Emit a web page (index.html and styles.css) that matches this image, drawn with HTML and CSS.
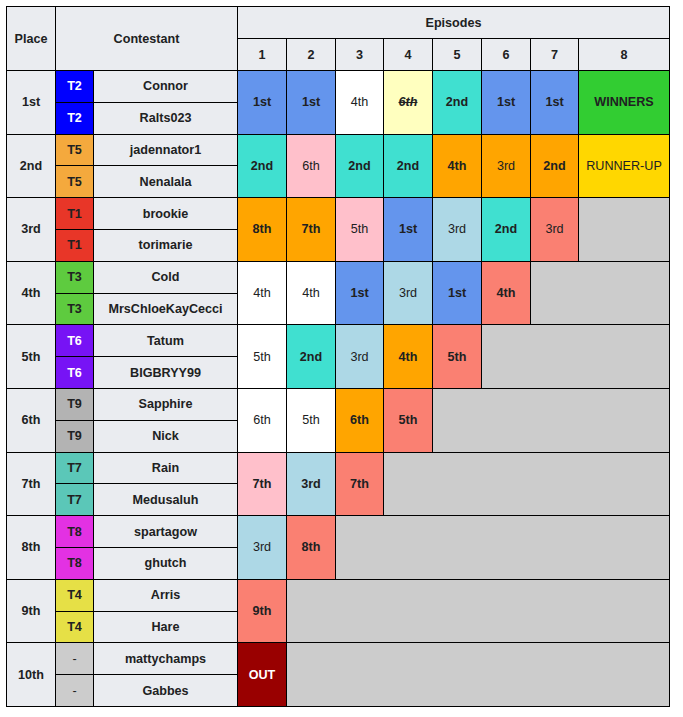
FILE: index.html
```html
<!DOCTYPE html>
<html>
<head>
<meta charset="utf-8">
<link rel="stylesheet" href="styles.css">
</head>
<body>
<div class="board">
  <div class="c hd r2">Place</div>
  <div class="c hd r2 s2">Contestant</div>
  <div class="c hd s8">Episodes</div>
  <div class="c hd">1</div><div class="c hd">2</div><div class="c hd">3</div><div class="c hd">4</div>
  <div class="c hd">5</div><div class="c hd">6</div><div class="c hd">7</div><div class="c hd">8</div>

  <!-- 1st -->
  <div class="c hd r2">1st</div>
  <div class="c t t2">T2</div><div class="c hd">Connor</div>
  <div class="c r2 blue b">1st</div><div class="c r2 blue b">1st</div><div class="c r2 wht">4th</div>
  <div class="c r2 ylw b strike">6th</div><div class="c r2 turq b">2nd</div><div class="c r2 blue b">1st</div>
  <div class="c r2 blue b">1st</div><div class="c r2 green b">WINNERS</div>
  <div class="c t t2">T2</div><div class="c hd">Ralts023</div>

  <!-- 2nd -->
  <div class="c hd r2">2nd</div>
  <div class="c t t5">T5</div><div class="c hd">jadennator1</div>
  <div class="c r2 turq b">2nd</div><div class="c r2 pink">6th</div><div class="c r2 turq b">2nd</div>
  <div class="c r2 turq b">2nd</div><div class="c r2 orng b">4th</div><div class="c r2 orng">3rd</div>
  <div class="c r2 orng b">2nd</div><div class="c r2 gold">RUNNER-UP</div>
  <div class="c t t5">T5</div><div class="c hd">Nenalala</div>

  <!-- 3rd -->
  <div class="c hd r2">3rd</div>
  <div class="c t t1">T1</div><div class="c hd">brookie</div>
  <div class="c r2 orng b">8th</div><div class="c r2 orng b">7th</div><div class="c r2 pink">5th</div>
  <div class="c r2 blue b">1st</div><div class="c r2 lblu">3rd</div><div class="c r2 turq b">2nd</div>
  <div class="c r2 salm">3rd</div><div class="c r2 fill f1"></div>
  <div class="c t t1">T1</div><div class="c hd">torimarie</div>

  <!-- 4th -->
  <div class="c hd r2">4th</div>
  <div class="c t t3">T3</div><div class="c hd">Cold</div>
  <div class="c r2 wht">4th</div><div class="c r2 wht">4th</div><div class="c r2 blue b">1st</div>
  <div class="c r2 lblu">3rd</div><div class="c r2 blue b">1st</div><div class="c r2 salm b">4th</div>
  <div class="c r2 fill f2"></div>
  <div class="c t t3">T3</div><div class="c hd">MrsChloeKayCecci</div>

  <!-- 5th -->
  <div class="c hd r2">5th</div>
  <div class="c t t6">T6</div><div class="c hd">Tatum</div>
  <div class="c r2 wht">5th</div><div class="c r2 turq b">2nd</div><div class="c r2 lblu">3rd</div>
  <div class="c r2 orng b">4th</div><div class="c r2 salm b">5th</div>
  <div class="c r2 fill f3"></div>
  <div class="c t t6">T6</div><div class="c hd">BIGBRYY99</div>

  <!-- 6th -->
  <div class="c hd r2">6th</div>
  <div class="c t t9">T9</div><div class="c hd">Sapphire</div>
  <div class="c r2 wht">6th</div><div class="c r2 wht">5th</div><div class="c r2 orng b">6th</div>
  <div class="c r2 salm b">5th</div>
  <div class="c r2 fill f4"></div>
  <div class="c t t9">T9</div><div class="c hd">Nick</div>

  <!-- 7th -->
  <div class="c hd r2">7th</div>
  <div class="c t t7">T7</div><div class="c hd">Rain</div>
  <div class="c r2 pink b">7th</div><div class="c r2 lblu b">3rd</div><div class="c r2 salm b">7th</div>
  <div class="c r2 fill f5"></div>
  <div class="c t t7">T7</div><div class="c hd">Medusaluh</div>

  <!-- 8th -->
  <div class="c hd r2">8th</div>
  <div class="c t t8">T8</div><div class="c hd">spartagow</div>
  <div class="c r2 lblu">3rd</div><div class="c r2 salm b">8th</div>
  <div class="c r2 fill f6"></div>
  <div class="c t t8">T8</div><div class="c hd">ghutch</div>

  <!-- 9th -->
  <div class="c hd r2">9th</div>
  <div class="c t t4">T4</div><div class="c hd">Arris</div>
  <div class="c r2 salm b">9th</div>
  <div class="c r2 fill f7"></div>
  <div class="c t t4">T4</div><div class="c hd">Hare</div>

  <!-- 10th -->
  <div class="c hd r2">10th</div>
  <div class="c t tn">-</div><div class="c hd">mattychamps</div>
  <div class="c r2 out b">OUT</div>
  <div class="c r2 fill f7"></div>
  <div class="c t tn">-</div><div class="c hd">Gabbes</div>
</div>
</body>
</html>
```

FILE: styles.css
```css
body {
  margin: 6px;
  background: #ffffff;
  font-family: "Liberation Sans", Arial, sans-serif;
  font-size: 12.6px;
  color: #202122;
}

.board {
  display: grid;
  width: max-content;
  background: #000000;
  padding: 1px;
  gap: 1px;
  grid-template-columns: 48px 37px 143px 48px 48px 47px 48px 48px 48px 47px 90px;
  grid-template-rows: 31px 31px repeat(20, 30.8px);
}

.c {
  display: flex;
  align-items: center;
  justify-content: center;
  text-align: center;
  white-space: nowrap;
  background: #ffffff;
}

.hd {
  background: #eaecf0;
  font-weight: bold;
}

.b { font-weight: bold; }

.r2 { grid-row: span 2; }
.s2 { grid-column: span 2; }
.s8 { grid-column: span 8; }

.f1 { grid-column: span 1; }
.f2 { grid-column: span 2; }
.f3 { grid-column: span 3; }
.f4 { grid-column: span 4; }
.f5 { grid-column: span 5; }
.f6 { grid-column: span 6; }
.f7 { grid-column: span 7; }

/* team colours */
.t { font-weight: bold; }
.t2 { background: #0000ff; color: #ffffff; }
.t5 { background: #f4a93d; }
.t1 { background: #e83628; }
.t3 { background: #5ecb3f; }
.t6 { background: #7713f5; color: #ffffff; }
.t9 { background: #b3b3b3; }
.t7 { background: #5bc7b8; }
.t8 { background: #e331e3; }
.t4 { background: #e6e046; }
.tn { background: #cccccc; font-weight: normal; }

/* result colours */
.wht { background: #ffffff; }
.blue { background: #6495ed; }
.turq { background: #40e0d0; }
.ylw { background: #ffffbf; }
.green { background: #32cd32; }
.gold { background: #ffd700; }
.pink { background: #ffc0cb; }
.orng { background: #ffa500; }
.lblu { background: #add8e6; }
.salm { background: #fa8072; }
.out { background: #990000; color: #ffffff; }
.fill { background: #cccccc; }

.strike {
  font-style: italic;
  text-decoration: line-through;
}
```
